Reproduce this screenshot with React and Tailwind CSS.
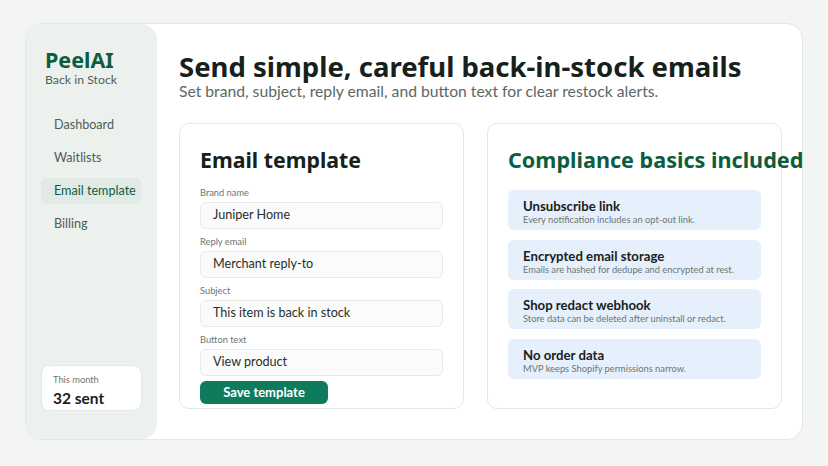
import React from "react";

const navItems = ["Dashboard", "Waitlists", "Email template", "Billing"];

const fields = [
  { label: "Brand name", value: "Juniper Home" },
  { label: "Reply email", value: "Merchant reply-to" },
  { label: "Subject", value: "This item is back in stock" },
  { label: "Button text", value: "View product" },
];

const basics = [
  { title: "Unsubscribe link", text: "Every notification includes an opt-out link." },
  { title: "Encrypted email storage", text: "Emails are hashed for dedupe and encrypted at rest." },
  { title: "Shop redact webhook", text: "Store data can be deleted after uninstall or redact." },
  { title: "No order data", text: "MVP keeps Shopify permissions narrow." },
];

const heading = { fontFamily: '"Noto Sans", "Open Sans", sans-serif' };

export default function App() {
  return (
    <div
      className="min-h-screen bg-[#f3f5f4] pt-[23px] px-[25px] text-[#17211c]"
      style={{ fontFamily: 'Lato, "Noto Sans", sans-serif' }}
    >
      <div className="flex h-[417px] bg-white rounded-[16px] border border-[#e2e8e5]">
        {/* Sidebar */}
        <aside className="w-[131px] shrink-0 bg-[#ecf1ee] rounded-[16px] flex flex-col px-[15px] pt-[23px] pb-[28px]">
          <div className="px-[4px]">
            <div style={heading} className="text-[21.5px] font-bold text-[#0e5c40] leading-[26px]">PeelAI</div>
            <div className="text-[12.3px] text-[#4f5d56] leading-[14px]">Back in Stock</div>
          </div>
          <nav className="mt-[25px] flex flex-col gap-[7px]">
            {navItems.map((item) => (
              <div
                key={item}
                className={`h-[26px] flex items-center px-[13px] rounded-[6px] text-[12.6px] whitespace-nowrap ${
                  item === "Email template" ? "bg-[#e2eae6] text-[#0e5c40]" : "text-[#4f5d56]"
                }`}
              >
                {item}
              </div>
            ))}
          </nav>
          <div className="mt-auto h-[46px] bg-white rounded-[8px] border border-[#e2e8e5] px-[11px] pt-[8px]">
            <div className="text-[9.3px] text-[#6b7770] leading-[12px]">This month</div>
            <div className="text-[15.5px] font-bold leading-[20px] mt-[2px]">32 sent</div>
          </div>
        </aside>

        {/* Main */}
        <main className="flex-1 pl-[22px] pt-[28px]">
          <h1 style={heading} className="text-[27.5px] font-bold leading-[30px]">
            Send simple, careful back-in-stock emails
          </h1>
          <p className="text-[15.7px] text-[#5b6862] leading-[18px]">
            Set brand, subject, reply email, and button text for clear restock alerts.
          </p>

          <div className="mt-[23px] flex gap-[23px]">
            <section className="w-[285px] h-[286px] border border-[#e2e8e5] rounded-[10px] px-[20px] pt-[22px]">
              <h2 style={heading} className="text-[21.3px] font-bold leading-[28px]">Email template</h2>
              <div className="mt-[13px] flex flex-col">
                {fields.map((f) => (
                  <div key={f.label} className="mb-[7px] last:mb-0">
                    <div className="text-[9.3px] text-[#6b7770] leading-[12px] mb-[3px]">{f.label}</div>
                    <div className="h-[27px] flex items-center px-[12px] rounded-[6px] border border-[#e6ebe8] bg-[#fafbfa] text-[12.6px] text-[#25302b]">
                      {f.value}
                    </div>
                  </div>
                ))}
              </div>
              <button className="mt-[5px] w-[128px] h-[23px] rounded-[6px] bg-[#0f7b5d] text-white text-[13px] font-bold">
                Save template
              </button>
            </section>

            <section className="w-[295px] h-[286px] border border-[#e2e8e5] rounded-[10px] px-[20px] pt-[22px]">
              <h2 style={heading} className="text-[21.6px] font-bold leading-[28px] text-[#0e5c40] whitespace-nowrap">
                Compliance basics included
              </h2>
              <div className="mt-[16px] flex flex-col gap-[9.6px]">
                {basics.map((b) => (
                  <div key={b.title} className="h-[40px] rounded-[6px] bg-[#e6effc] px-[15px] pt-[8px]">
                    <div className="text-[13.2px] font-bold leading-[16px] text-[#17211c]">{b.title}</div>
                    <div className="text-[9.3px] leading-[11px] text-[#6b7770] whitespace-nowrap">{b.text}</div>
                  </div>
                ))}
              </div>
            </section>
          </div>
        </main>
      </div>
    </div>
  );
}
